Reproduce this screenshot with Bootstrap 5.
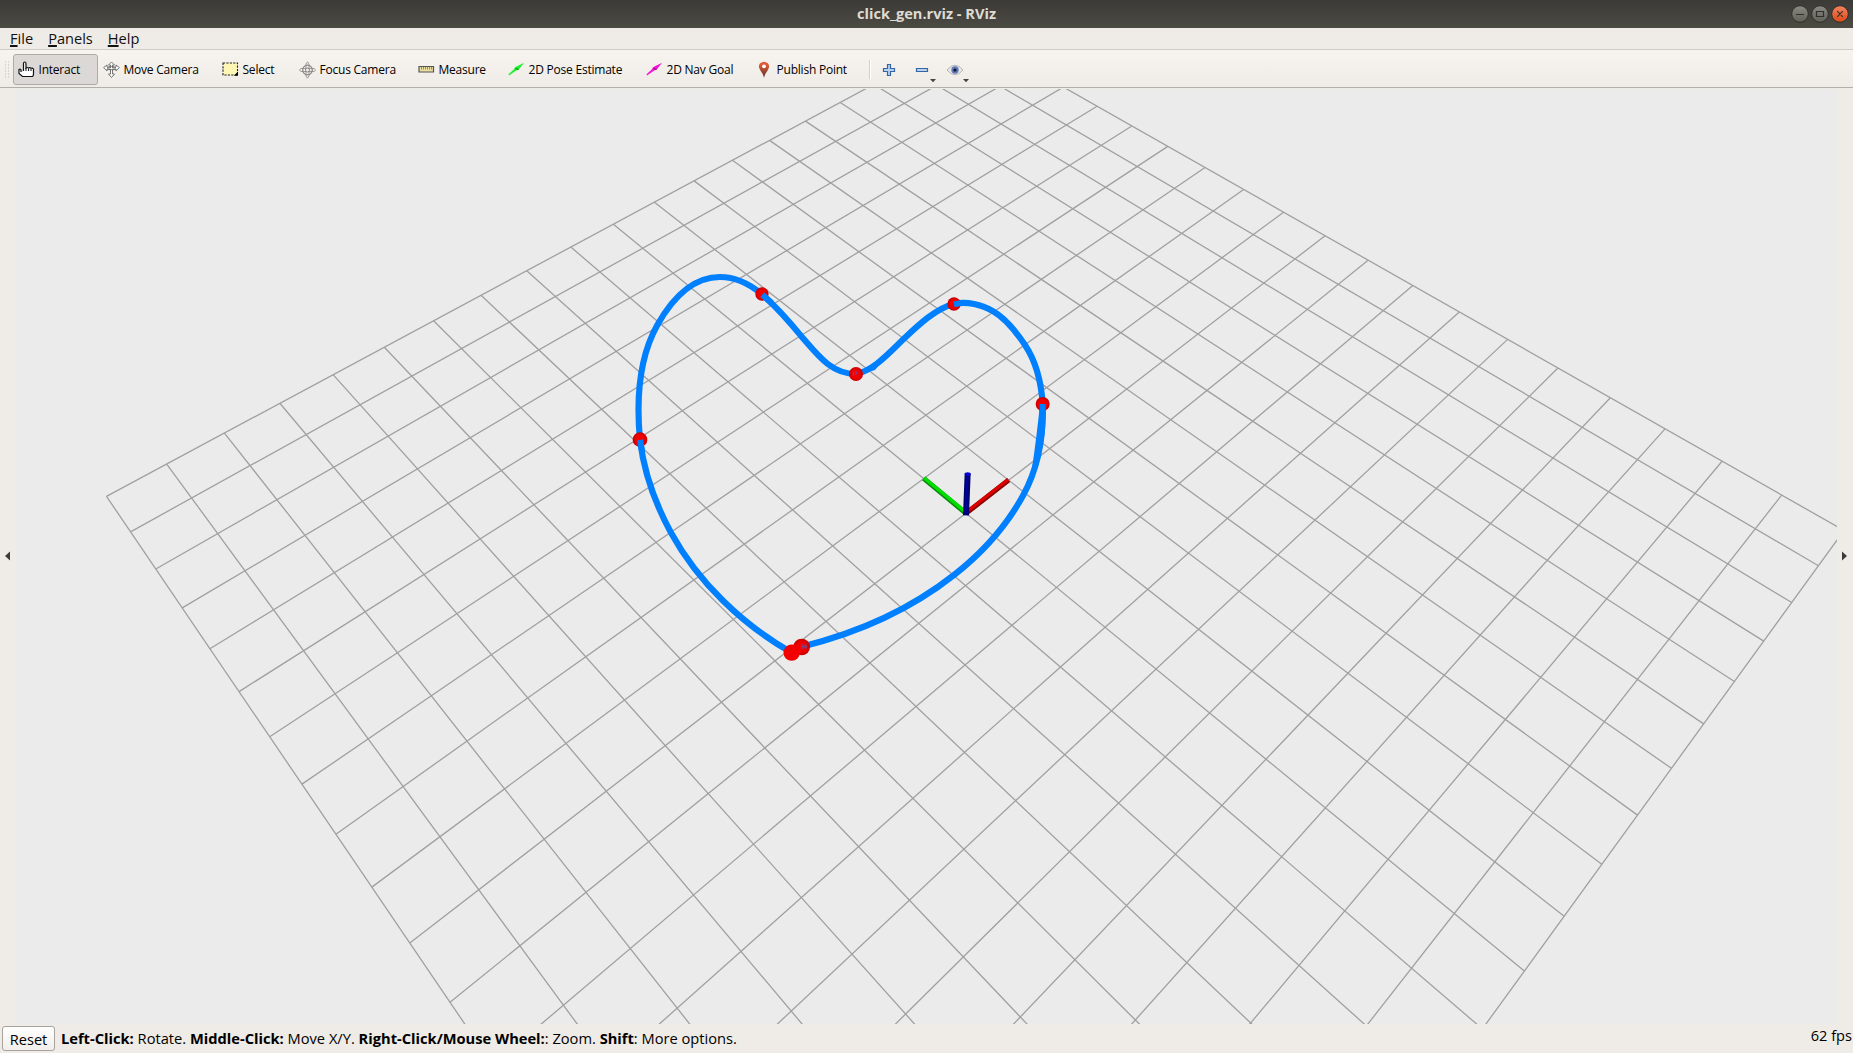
<!DOCTYPE html>
<html lang="en">
<head>
<meta charset="utf-8">
<meta name="viewport" content="width=device-width, initial-scale=1">
<title>click_gen.rviz - RViz</title>
<link href="https://cdn.jsdelivr.net/npm/bootstrap@5.3.0/dist/css/bootstrap.min.css" rel="stylesheet">
<script src="https://cdn.jsdelivr.net/npm/bootstrap@5.3.0/dist/js/bootstrap.bundle.min.js"></script>
<style>
body{font-family:"Open Sans","Noto Sans",sans-serif;background:#efebe6;color:#000;font-size:14.6px;line-height:1}
svg{display:block;flex:none}
.titlebar{height:28px;background:linear-gradient(#3b3a36,#4b4a43);color:#dfdbd2;font-weight:700;font-size:14.6px}
.titlebar .cap{width:68px}
.wtitle{padding-bottom:2px}
.menus{height:22px;border-bottom:1px solid #d0ccc7;padding:0 0 0 10px;gap:15px;color:#111;line-height:15px}
.menus u{text-decoration-thickness:2px;text-underline-offset:1px;text-decoration-skip-ink:none}
.tools{height:38px;background:linear-gradient(#f7f4f0,#efebe6);border-bottom:1px solid #b2aea9;padding:2px 0 0 4px}
.tool{height:31px;padding:0 0 0 4px;border:1px solid transparent;border-radius:3px;gap:3.500px;background:none;font-size:12px;line-height:1;letter-spacing:-.22px;color:#000;white-space:nowrap}
.tool.on{background:#dcd8d5;border-color:#aeaaa6}
.w85{width:85px}.w119{width:119px}.w77{width:77px}.w90{width:90px}.w138{width:138px}.w110{width:110px}.w118{width:118px}
.vsep{width:2px;height:19px;background:#d3cfca;border-right:1px solid #fff}
.minis{padding-left:12px;margin-left:-1px}
.side{width:16px}
.stage{background:#ebebeb;margin-top:1px;min-width:0}
.foot{height:29px;padding:0 1px 0 2px}
.reset{width:53px;height:25px;padding:1px 0 0;border:1px solid #a8a39d;border-radius:3px;background:linear-gradient(#fff,#f1efec);font-size:14.6px;line-height:1;color:#000}
.hint{margin-left:6px;font-size:14.66px}
.fps{padding-bottom:6px}
</style>
</head>
<body class="vh-100 overflow-hidden d-flex flex-column">
<header class="titlebar d-flex align-items-center justify-content-between">
  <span class="cap"></span><span class="wtitle">click_gen.rviz - RViz</span>
  <svg class="cap" width="68" height="28" viewBox="1785 0 68 28">
    <defs>
      <linearGradient id="gb" x2="0" y2="1"><stop stop-color="#8a8982"/><stop offset="1" stop-color="#605f58"/></linearGradient>
      <linearGradient id="rb" x2="0" y2="1"><stop stop-color="#f58461"/><stop offset="1" stop-color="#dd4814"/></linearGradient>
    </defs>
    <g stroke="#31302c">
    <circle cx="1800" cy="14" r="8.3" fill="url(#gb)"/><circle cx="1820" cy="14" r="8.3" fill="url(#gb)"/><circle cx="1840" cy="14" r="8.3" fill="url(#rb)"/>
    <path d="M1796 14.5h8M1816.500 11.500h7v5h-7zM1837.200 11.200l5.600 5.600m0-5.600l-5.600 5.600" fill="none" stroke-width="1.2"/>
    </g>
  </svg>
</header>
<nav class="menus d-flex align-items-center"><span><u>F</u>ile</span><span><u>P</u>anels</span><span><u>H</u>elp</span></nav>
<div class="tools d-flex align-items-center">
  <svg width="9" height="17"><path d="M1.500 .5v17M4.500 .5v17" stroke="#bcb8b3" stroke-dasharray="1 2"/></svg>
  <button class="tool on btn d-flex align-items-center w85">
    <svg width="17" height="18" viewBox="0 0 17 18"><path d="M5.500 10V2.500q0-1.500 1.200-1.500t1.300 1.500V7q1.200-1 2.500 0 1.300-.9 2.500.3 1.400-.8 2.500.7V13q0 1.600-1 2.500H4.500L1 12.500V8.500q1.300-.8 2 .5v2" fill="#fff" stroke="#111" stroke-width="1.2"/><path d="M8 7v3M10.600 7.500v2.500M13 8v2" stroke="#111" fill="none"/></svg>
    Interact</button>
  <button class="tool btn d-flex align-items-center w119">
    <svg width="17" height="18" viewBox="0 0 17 18" fill="#fff" stroke="#666" stroke-width=".9"><path d="M8.500 1L5.500 4h2v3Q5.500 6.800 4 6V4L.7 6.500 4 10V8q2 .8 3.500.8V13h-2l3 3.500 3-3.500h-2V8.800Q11 8.800 13 8v2l3.300-3.500L13 4v2q-1.500.8-3.500 1V4h2z"/><ellipse cx="8.500" cy="7" rx="4" ry="1.600" fill="none"/></svg>
    Move Camera</button>
  <button class="tool btn d-flex align-items-center w77">
    <svg width="17" height="18" viewBox="0 0 17 18"><path d="M1 2h14.500v12H1z" fill="#fdf6b5" stroke="#222" stroke-width="1.100" stroke-dasharray="2.200 1.200"/><path d="M16 10.500v4.200h-4z"/></svg>
    Select</button>
  <button class="tool btn d-flex align-items-center w119">
    <svg width="17" height="18" viewBox="0 0 17 18" fill="none" stroke="#868686"><circle cx="8.500" cy="9" r="4.800" stroke-width="1.200"/><circle cx="8.500" cy="9" r="2"/><path d="M8.500 .8l1.500 2.200v4.500H15l1.600 1.500L15 10.500h-5V15l-1.500 2.200L7 15v-4.500H2L.4 9 2 7.500h5V3z" stroke-width=".8"/></svg>
    Focus Camera</button>
  <button class="tool btn d-flex align-items-center w90">
    <svg width="17" height="18" viewBox="0 0 17 18"><path d="M1 5.500h14.500V11H1z" fill="#eadfa2" stroke="#555" stroke-width="1.200"/><path d="M3.500 6v2.500M5.500 6v2.500M7.500 6v2.500M9.500 6v2.500M11.500 6v2.500M13.500 6v2.500" stroke="#777" stroke-width=".8"/></svg>
    Measure</button>
  <button class="tool btn d-flex align-items-center w138">
    <svg width="17" height="18" viewBox="0 0 17 18"><path d="M.5 13.300l5.500-5 1-2L16 1.700l-5.200 6.900-2.600.9-7.200 5z" fill="#1cf32b"/><path d="M7.500 7.500l3 1" stroke="#146c1b"/></svg>
    2D Pose Estimate</button>
  <button class="tool btn d-flex align-items-center w110">
    <svg width="17" height="18" viewBox="0 0 17 18"><path d="M.5 13.300l5.500-5 1-2L16 1.700l-5.200 6.900-2.600.9-7.200 5z" fill="#f312d6"/><path d="M7.500 7.500l3 1" stroke="#7a126d"/></svg>
    2D Nav Goal</button>
  <button class="tool btn d-flex align-items-center w118">
    <svg width="17" height="18" viewBox="0 0 17 18"><defs><linearGradient id="pin" x2="0" y2="1"><stop offset=".2" stop-color="#e2583b"/><stop offset="1" stop-color="#4f3524"/></linearGradient></defs><path d="M8 16.800Q7.500 13.500 4.400 9.600 1.500 5 4.100 2.200 8-.8 11.900 2.200 14.500 5 11.600 9.600 8.500 13.500 8 16.800z" fill="url(#pin)"/><circle cx="8" cy="5.300" r="1.900" fill="#fff"/></svg>
    Publish Point</button>
  <span class="vsep"></span>
  <svg class="minis" width="112" height="30" viewBox="882 54 100 30">
    <path d="M887.500 63.500h3v4h4v3h-4v4h-3v-4h-4v-3h4z" fill="#b9d1ec" stroke="#3465a4" stroke-width="1.200"/>
    <path d="M916.500 67.500h11v3h-11z" fill="#b9d1ec" stroke="#3465a4" stroke-width="1.200"/>
    <path d="M930 78h6l-3 3.300zM963 78h6l-3 3.300z" fill="#444"/>
    <path d="M947 69q8-9.500 16 0-8 9.500-16 0z" fill="#e9e9e9" stroke="#b5b5b5"/><circle cx="955" cy="69" r="3.700" fill="#5f78b8"/><circle cx="955" cy="69" r="1.600" fill="#10152b"/>
  </svg>
</div>
<main class="flex-fill d-flex overflow-hidden">
  <div class="side d-flex align-items-center"><svg width="16" height="12"><path d="M10 1.500v9L5 6z" fill="#3c3b37"/></svg></div>
  <div class="stage flex-fill">
    <svg width="1821" height="935" viewBox="16 89 1821 935">
      <defs>
        <radialGradient id="ball"><stop offset=".55" stop-color="#f20000"/><stop offset="1" stop-color="#c60000"/></radialGradient>
      </defs>
      <path id="mesh" fill="none" stroke="#a0a0a1" stroke-width="1.300"/>
      <g transform="translate(600 250) scale(.33333)">
        <g fill="none" stroke="#0080ff" stroke-width="18.500">
          <path d="M575 1208C427 1124 295 997 213 848C166 762 132 667 120 570C109 454 116 325 172 225C213 152 272 81 360 81C406 81 450 103 485 132C527 168 567 213 605 260C655 318 695 372 768 372C820 362 866 310 910 268C956 224 1008 175 1062 162C1100 153 1145 163 1180 184C1220 207 1249 246 1275 285C1309 336 1324 400 1328 462"/>
          <path d="M1328 462C1331 555 1314 654 1270 735C1219 829 1146 909 1062 975C930 1079 768 1150 605 1190"/>
        </g>
        <path d="M1320 462h17q2 80-12 140-6 40-22 66l-6-20q12-80 23-186z" fill="#0080ff"/>
        <path d="M775 375l30-25 45-20-25 30z" fill="#0080ff"/>
        <g fill="url(#ball)"><circle cx="486" cy="132" r="20"/><circle cx="768" cy="372" r="21"/><circle cx="1062" cy="162" r="20"/><circle cx="1328" cy="462" r="21"/><circle cx="120" cy="569" r="22"/><circle cx="605" cy="1191" r="25"/></g>
        <circle cx="575" cy="1208" r="24.500" fill="#f20000"/>
        <path d="M487 134l28 25M1062 163l28-5M1328 462v40M120 570l6 34" stroke="#0080ff" stroke-width="18"/>
        <path d="M760 364v14M765 366h6v6h-6M606 1182v16M612 1184v12M618 1182v14M604 1190h17" stroke="#6a4a9a" stroke-width="3" fill="none"/>
        <g stroke-width="15">
          <path d="M1098 790L1226 690" stroke="#8a0000"/><path d="M1097 788L1225 688" stroke="#e00000" stroke-width="9"/>
          <path d="M1098 790L971 685" stroke="#088a08"/><path d="M1099 788L972 683" stroke="#00e000" stroke-width="10"/>
          <path d="M1098 796L1103 670" stroke="#000070" stroke-width="18"/><path d="M1097 790L1102 680" stroke="#00009a" stroke-width="7"/>
          <ellipse cx="1103" cy="672" rx="9" ry="5" fill="#0000e0"/>
        </g>
      </g>
    </svg>
  </div>
  <div class="side d-flex align-items-center"><svg width="16" height="12"><path d="M5 1.500v9L10 6z" fill="#3c3b37"/></svg></div>
</main>
<footer class="foot d-flex align-items-center">
  <button class="reset btn">Reset</button>
  <span class="hint"><b>Left-Click:</b> Rotate. <b>Middle-Click:</b> Move X/Y. <b>Right-Click/Mouse Wheel:</b>: Zoom. <b>Shift</b>: More options.</span>
  <span class="fps ms-auto">62 fps</span>
</footer>
<script>
// Perspective projection of the 20 x 20 ground grid
const H = [63.75594, 21.16984, 106.48, -22.43836, 23.58363, 496.35, 0.02130015, -0.02235793];
const project = (i, j) => {
  const w = 1 + H[6] * i + H[7] * j;
  return ((H[0] * i + H[1] * j + H[2]) / w).toFixed(2) + ' ' + ((H[3] * i + H[4] * j + H[5]) / w).toFixed(2);
};
let mesh = '';
for (let k = 0; k <= 20; k++) {
  mesh += `M${project(k, 0)}L${project(k, 20)}M${project(0, k)}L${project(20, k)}`;
}
document.getElementById('mesh').setAttribute('d', mesh);
</script>
</body>
</html>
